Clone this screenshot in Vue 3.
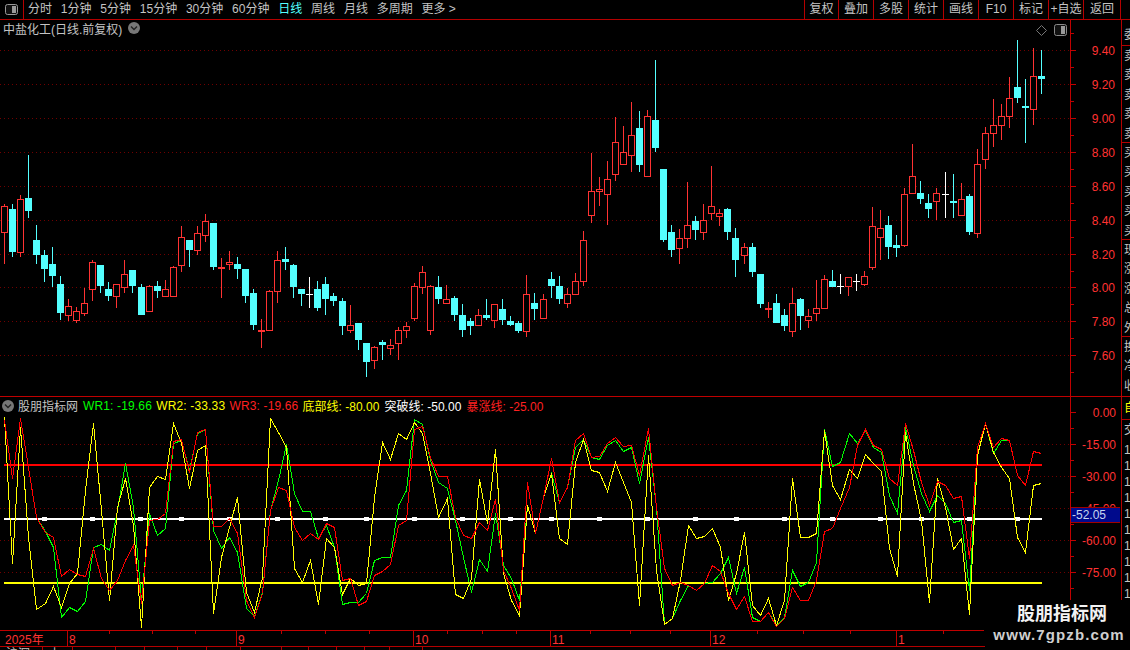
<script setup>
const stepX = 8.04
const xOf = (i) => 4.33 + stepX * i

const seg1 = [
  [192,199,278,372,'r'],[192,207,336,351,'c'],[165,178,338,351,'r'],[45,174,213,234,'c'],[255,300,345,372,'c'],
  [330,345,387,426,'c'],[321,372,408,441,'c'],[408,432,519,540,'c'],[477,499,527,543,'r'],[501,514,542,549,'r'],
  [444,490,521,528,'r'],[360,367,449,483,'r'],[375,375,438,459,'c'],[426,447,468,483,'c'],[433,433,470,504,'r'],
  [360,403,443,459,'r'],[390,390,438,459,'c'],[432,441,525,525,'c'],[435,439,515,515,'r'],[423,438,453,474,'c'],
  [420,448,470,470,'r'],[378,382,470,470,'r'],[258,292,377,396,'r'],[300,300,330,381,'c'],[258,280,332,345,'r'],
  [222,244,287,306,'r'],[249,249,381,390,'c'],[354,382,388,474,'r'],[333,367,374,390,'r'],[351,372,387,417,'c'],
  [387,387,468,489,'c'],[447,459,555,570,'c'],[537,570,576,624,'d'],[450,454,572,572,'r'],[333,361,455,489,'r'],
  [321,357,366,390,'c'],[372,375,441,474,'c'],[447,447,462,498,'c'],[411,462,465,504,'w'],[423,447,504,513,'c'],
  [411,432,477,525,'c'],[459,468,483,498,'c'],[474,483,558,585,'c'],[495,556,572,579,'r'],[549,549,600,630,'c']
]
const seg2 = [
  [879,879,936,981,'c'],[888,892,932,957,'r'],[870,876,885,930,'c'],[867,886,896,915,'r'],[831,841,881,930,'r'],
  [816,829,842,864,'r'],[699,709,806,813,'r'],[648,667,713,732,'r'],[705,709,842,855,'r'],[678,711,747,762,'c'],
  [705,748,762,762,'r'],[738,744,795,813,'c'],[762,795,840,861,'c'],[804,813,828,855,'c'],[777,796,827,827,'r'],
  [747,795,804,810,'c'],[763,763,812,834,'r'],[747,777,810,825,'c'],[798,813,825,828,'c'],[813,819,843,849,'c'],
  [675,733,845,861,'r'],[729,759,777,810,'c'],[732,748,806,806,'r'],[666,687,708,744,'c'],[678,708,747,762,'c'],
  [714,733,761,774,'r'],[669,694,734,734,'r'],[543,571,695,708,'r'],[309,424,497,519,'r'],[381,418,425,468,'r'],
  [333,388,434,525,'r'],[201,277,374,393,'r'],[228,307,344,344,'r'],[156,256,317,366,'r'],[183,234,345,366,'c'],
  [180,199,380,380,'r'],[30,210,294,306,'c'],[357,357,570,576,'c'],[525,546,600,621,'c'],[537,565,596,642,'r'],
  [396,526,566,594,'r'],[498,513,540,570,'c'],[462,511,548,570,'r'],[348,469,491,510,'r']
]
const seg3 = [
  [537,549,560,588,'r'],[534,537,606,630,'c'],[594,624,690,741,'c'],[639,652,677,702,'r'],[639,651,726,741,'c'],
  [732,732,822,834,'c'],[816,834,839,864,'d'],[792,819,879,879,'c'],[837,855,888,903,'c'],[774,820,905,921,'r'],
  [804,807,858,900,'c'],[837,859,873,894,'r'],[750,835,851,873,'r'],[735,748,836,836,'r'],[720,753,771,771,'c'],
  [732,768,771,792,'w'],[742,742,770,798,'r'],[732,752,755,783,'w'],[723,739,765,768,'r'],[531,589,713,720,'r'],
  [540,595,623,690,'r'],[558,585,651,687,'c'],[615,645,654,681,'c'],[474,493,647,651,'r'],[342,439,491,491,'r'],
  [453,489,507,522,'c'],[492,519,537,564,'c'],[474,490,515,570,'r'],[426,492,495,564,'w'],[432,513,519,564,'c'],
  [459,508,559,559,'r'],[492,498,606,615,'c'],[357,403,611,624,'r'],[291,310,389,417,'r'],[207,286,311,351,'r'],
  [222,259,287,330,'r'],[141,205,260,294,'r'],[30,171,204,219,'c'],[147,228,234,339,'c'],[54,139,239,285,'r'],
  [60,139,147,192,'c']
]

const toCandles = (origin, rows) => rows.map(([h, t, b, l, k]) => ({
  h: Math.round(origin + h / 3),
  t: Math.round(origin + t / 3),
  b: Math.round(origin + b / 3),
  l: Math.round(origin + l / 3),
  k
}))

const candles = [...toCandles(140, seg1), ...toCandles(50, seg2), ...toCandles(30, seg3)].map((c, i) => {
  const px = Math.floor(xOf(i))
  return { ...c, px, key: i }
})

const colorOf = { r: '#ff3232', c: '#54ffff', d: '#ff3232', w: '#ffffff' }

const yellow = [20,460,50,380,597,580,527,590,520,490,240,40,300,570,290,205,345,650,230,198,208,40,100,235,120,105,610,440,350,260,545,605,500,25,65,110,475,515,450,583,385,410,553,505,
  525,518,260,95,148,70,87,35,70,190,320,263,553,565,505,208,340,118,490,570,615,285,370,260,190,385,403,155,88,180,185,243,155,215,275,585,135,480,642,625,510,345,385,378,
  355,410,570,490,367,585,615,563,645,570,205,382,382,370,60,225,268,178,203,133,160,183,415,498,65,220,330,575,205,290,417,385,612,135,40,125,170,205,380,427,225,220]
const green = [30,205,25,170,320,362,410,620,590,604,573,410,403,420,300,158,290,570,308,375,355,100,90,180,70,58,360,415,380,425,595,618,545,300,210,103,250,303,303,385,345,410,583,575,
  575,550,450,442,442,285,240,28,42,150,215,235,330,440,545,448,482,310,465,505,570,285,370,260,190,275,230,110,88,140,148,105,90,122,110,220,80,290,642,625,570,525,540,520,
  515,490,440,550,472,620,632,605,645,620,480,527,515,455,58,168,155,70,100,60,110,125,255,310,50,165,250,302,255,280,335,330,540,135,40,130,90,90,195,225,122,130]
const red = [30,205,25,170,320,365,380,498,478,492,497,415,505,540,510,450,405,580,330,328,310,92,88,185,65,58,348,348,325,370,570,620,550,300,230,240,350,390,370,388,338,350,510,505,
  585,572,495,483,463,345,330,58,48,140,198,198,320,375,385,335,360,268,480,535,600,215,370,260,145,275,230,90,68,140,138,100,80,108,105,195,55,290,475,525,515,525,540,520,
  465,482,550,597,558,632,634,605,648,625,530,570,570,510,362,355,295,230,105,57,105,118,205,225,38,120,215,285,212,225,265,258,445,110,40,110,85,90,195,225,122,130]

const toPts = (arr) => arr.map((z, i) => `${Math.round(xOf(i)) + 0.5},${Math.round(410 + z / 3) + 0.5}`).join(' ')
const series = [
  { id: 'g', color: '#00ff00', pts: toPts(green) },
  { id: 'y', color: '#ffff00', pts: toPts(yellow) },
  { id: 'r', color: '#ff0000', pts: toPts(red) }
]

const mainGrid = [50, 84, 118, 152, 186, 220, 254, 287, 321, 355]
const mainLabels = [
  ['9.40', 50], ['9.20', 84], ['9.00', 118], ['8.80', 152], ['8.60', 186],
  ['8.40', 220], ['8.20', 254], ['8.00', 287], ['7.80', 321], ['7.60', 355]
]
const mainMinor = [33, 67, 101, 135, 169, 203, 237, 271, 304, 338, 372]
const indGrid = [444, 476, 508, 540, 572]
const indLabels = [['0.00', 412], ['-15.00', 444], ['-30.00', 476], ['-45.00', 508], ['-60.00', 540], ['-75.00', 572]]
const indMinor = [428, 460, 492, 524, 556, 588]
const squares = [44, 92, 140, 181, 229, 277, 325, 366, 414, 462, 510, 551, 599, 647, 695, 736, 784, 832, 880, 921, 969, 1017]

const periods = [
  { t: '分时' }, { t: '1分钟' }, { t: '5分钟' }, { t: '15分钟' }, { t: '30分钟' }, { t: '60分钟' },
  { t: '日线', on: true }, { t: '周线' }, { t: '月线' }, { t: '多周期' }, { t: '更多 >' }
]
const tools = [
  { t: '复权', w: 34 }, { t: '叠加', w: 35 }, { t: '多股', w: 35 }, { t: '统计', w: 35 }, { t: '画线', w: 35 },
  { t: 'F10', w: 35 }, { t: '标记', w: 35 }, { t: '+自选', w: 35 }, { t: '返回', w: 37 }
]
const legend = [
  { t: 'WR1: -19.66', c: 'lg wr' }, { t: 'WR2: -33.33', c: 'ly wr' }, { t: 'WR3: -19.66', c: 'lr wr' },
  { t: '底部线: -80.00', c: 'ly' }, { t: '突破线: -50.00', c: 'lw' }, { t: '暴涨线: -25.00', c: 'lr' }
]
const quoteGroups = [
  ['委'], ['卖', '卖', '卖', '卖', '卖'], ['买', '买', '买', '买', '买'], ['现', '涨', '涨', '总', '外'], ['换', '净', '收']
]
const tradeRows = Array.from({ length: 10 }, (_, i) => i)

const months = [[67, '8'], [236, '9'], [413, '10'], [550, '11'], [710, '12'], [896, '1']]
const minorTicks = [109, 152, 195, 281, 325, 369, 447, 482, 516, 590, 630, 670, 757, 803, 850, 943]
const tabs = [
  { t: '沪深', w: 43 }, { t: '上', w: 30 }, { t: '', w: 43 }, { t: '', w: 29 }, { t: '', w: 33 }, { t: '', w: 29 },
  { t: '', w: 34 }, { t: '', w: 41 }, { t: '', w: 27 }, { t: '', w: 28 }, { t: '', w: 28 }, { t: '', w: 25 }, { t: '', w: 33 }
]
</script>

<template>
  <div class="app">
    <header class="toolbar">
      <div class="logo">
        <svg width="13" height="11" viewBox="0 0 13 11">
          <rect x="0.5" y="0.5" width="12" height="10" rx="2" fill="#111" stroke="#9a9a9a" />
          <rect x="7" y="2" width="4" height="7" fill="#9a9a9a" />
        </svg>
      </div>
      <nav class="periods">
        <span v-for="p in periods" :key="p.t" :class="['period', { on: p.on }]">{{ p.t }}</span>
      </nav>
      <div class="tools">
        <span v-for="b in tools" :key="b.t" class="tool" :style="{ width: b.w + 'px' }">{{ b.t }}</span>
      </div>
    </header>

    <section class="main">
      <div class="plot">
        <svg class="chart" width="1070" height="376" viewBox="0 20 1070 376" shape-rendering="crispEdges">
          <line v-for="y in mainGrid" :key="y" x1="0" x2="1070" :y1="y + 0.5" :y2="y + 0.5" class="dots" />
          <g v-for="c in candles" :key="c.key">
            <rect :x="c.px" :y="c.h" width="1" :height="c.l - c.h" :fill="colorOf[c.k]" />
            <rect v-if="c.k === 'r'" :x="c.px - 2.5" :y="c.t + 0.5" width="6" :height="Math.max(c.b - c.t - 1, 1)" fill="#000" stroke="#ff3232" />
            <rect v-else :x="c.px - 3" :y="c.t" width="7" :height="Math.max(c.b - c.t, 1)" :fill="colorOf[c.k]" />
          </g>
        </svg>
        <div class="title">
          <span>中盐化工(日线.前复权)</span>
          <svg class="chev" width="12" height="12" viewBox="0 0 12 12">
            <circle cx="6" cy="6" r="6" fill="#777" />
            <path d="M3 4.5 L6 7.5 L9 4.5" fill="none" stroke="#222" stroke-width="1.4" />
          </svg>
        </div>
        <div class="corner">
          <svg width="11" height="11" viewBox="0 0 11 11">
            <path d="M5.5 0.5 L10.5 5.5 L5.5 10.5 L0.5 5.5 Z" fill="none" stroke="#777" />
          </svg>
          <svg width="13" height="12" viewBox="0 0 13 12">
            <rect x="0.5" y="0.5" width="12" height="11" rx="2" fill="#111" stroke="#8a8a8a" />
            <rect x="7" y="2" width="4" height="8" fill="#9a9a9a" />
          </svg>
        </div>
      </div>
      <div class="axis">
        <svg width="50" height="376" viewBox="1071 20 50 376" shape-rendering="crispEdges">
          <line v-for="l in mainLabels" :key="l[0]" x1="1071" x2="1076" :y1="l[1] + 0.5" :y2="l[1] + 0.5" class="tick" />
          <line v-for="y in mainMinor" :key="y" x1="1071" x2="1074" :y1="y + 0.5" :y2="y + 0.5" class="tick" />
          <text v-for="l in mainLabels" :key="'t' + l[0]" x="1115" :y="l[1] + 5" class="axis-text" text-anchor="end">{{ l[0] }}</text>
        </svg>
      </div>
      <aside class="side">
        <div v-for="(g, gi) in quoteGroups" :key="gi" :class="['group', 'group-' + gi]">
          <span v-for="(c, ci) in g" :key="ci">{{ c }}</span>
        </div>
      </aside>
    </section>

    <section class="indicator">
      <div class="plot">
        <svg class="chart" width="1070" height="233" viewBox="0 397 1070 233" shape-rendering="crispEdges">
          <line v-for="y in indGrid" :key="y" x1="0" x2="1070" :y1="y + 0.5" :y2="y + 0.5" class="dots" />
          <rect x="4" y="464" width="1038" height="2" fill="#ff0000" />
          <rect x="4" y="518" width="1038" height="2" fill="#ffffff" />
          <rect x="4" y="582" width="1038" height="2" fill="#ffff00" />
          <rect v-for="s in squares" :key="s" :x="s - 2" y="517" width="5" height="4" fill="#ffffff" />
          <polyline v-for="s in series" :key="s.id" :points="s.pts" fill="none" :stroke="s.color" stroke-width="1" />
        </svg>
        <div class="legend">
          <svg class="chev" width="12" height="12" viewBox="0 0 12 12">
            <circle cx="6" cy="6" r="6" fill="#777" />
            <path d="M3 4.5 L6 7.5 L9 4.5" fill="none" stroke="#222" stroke-width="1.4" />
          </svg>
          <span class="lname">股朋指标网</span>
          <span v-for="l in legend" :key="l.t" :class="['litem', l.c]">{{ l.t }}</span>
        </div>
      </div>
      <div class="axis">
        <svg width="50" height="233" viewBox="1071 397 50 233" shape-rendering="crispEdges">
          <line v-for="l in indLabels" :key="l[0]" x1="1071" x2="1076" :y1="l[1] + 0.5" :y2="l[1] + 0.5" class="tick" />
          <line v-for="y in indMinor" :key="y" x1="1071" x2="1074" :y1="y + 0.5" :y2="y + 0.5" class="tick" />
          <text v-for="l in indLabels" :key="'t' + l[0]" x="1116" :y="l[1] + 5" class="axis-text" text-anchor="end">{{ l[0] }}</text>
        </svg>
        <div class="tag">-52.05</div>
      </div>
      <aside class="side">
        <div class="self">自</div>
        <div class="trade-head">交</div>
        <div class="trades">
          <span v-for="r in tradeRows" :key="r">1</span>
        </div>
      </aside>
    </section>

    <footer class="timeaxis">
      <svg width="985" height="16" viewBox="0 630 985 16" shape-rendering="crispEdges">
        <line x1="0" x2="984" y1="630.5" y2="630.5" class="tick" />
        <line v-for="m in months" :key="m[0]" :x1="m[0] + 0.5" :x2="m[0] + 0.5" y1="630" y2="646" class="tick" />
        <line v-for="t in minorTicks" :key="t" :x1="t + 0.5" :x2="t + 0.5" y1="631" y2="634" class="tick" />
        <text x="5" y="644" class="time-text">2025年</text>
        <text v-for="m in months" :key="'m' + m[0]" :x="m[0] + 2" y="644" class="time-text">{{ m[1] }}</text>
      </svg>
    </footer>

    <div class="tabs">
      <span v-for="(t, i) in tabs" :key="i" class="tab" :style="{ width: t.w + 'px' }">{{ t.t }}</span>
    </div>

    <div class="watermark">
      <div class="wm-name">股朋指标网</div>
      <div class="wm-url">www.7gpzb.com</div>
    </div>
  </div>
</template>

<style scoped>
.app {
  position: relative;
  width: 1130px;
  height: 650px;
  overflow: hidden;
  background: #000;
  display: flex;
  flex-direction: column;
  color: #c4c4c4;
  font-family: "Liberation Sans", "Noto Sans CJK SC", sans-serif;
  font-size: 12px;
}
.toolbar {
  height: 19px;
  flex: none;
  display: flex;
  border-bottom: 1px solid #b40000;
  line-height: 19px;
}
.logo {
  border-right: 1px solid #b40000;
  display: flex;
  align-items: center;
  padding-left: 5px;
  box-sizing: border-box;
  width: 24px;
}
.periods {
  display: flex;
  gap: 8.8px;
  padding-left: 4px;
}
.period.on { color: #54ffff; }
.tools {
  margin-left: auto;
  display: flex;
  padding-right: 9px;
}
.tool {
  box-sizing: border-box;
  border-left: 1px solid #b40000;
  text-align: center;
  white-space: nowrap;
}
.tool:last-child { border-right: 1px solid #b40000; width: 38px !important; }

.main {
  height: 377px;
  flex: none;
  display: flex;
  border-bottom: 1px solid #c00000;
  box-sizing: border-box;
}
.indicator {
  height: 233px;
  flex: none;
  display: flex;
}
.plot {
  position: relative;
  width: 1070px;
  flex: none;
}
.chart { display: block; }
.dots {
  stroke: #700000;
  stroke-width: 1;
  stroke-dasharray: 1 3;
}
.tick { stroke: #c00000; stroke-width: 1; }
.axis {
  position: relative;
  width: 51px;
  flex: none;
  box-sizing: border-box;
  border-left: 1px solid #c00000;
}
.axis svg { display: block; }
.axis-text {
  fill: #ff3232;
  font-size: 12px;
  font-family: "Liberation Sans", sans-serif;
}
.side {
  flex: none;
  width: 9px;
  box-sizing: border-box;
  border-left: 1px solid #b40000;
  overflow: hidden;
  display: flex;
  flex-direction: column;
  padding-left: 2px;
}
.group {
  display: flex;
  flex-direction: column;
  box-sizing: border-box;
  height: 97px;
  border-bottom: 1px solid #b40000;
  margin-left: -2px;
  padding-left: 2px;
  width: 20px;
  padding-top: 1px;
}
.group-0 { height: 26px; padding-top: 6px; }
.group-4 { height: 60px; border-bottom: 0; }
.group span {
  height: 19.4px;
  line-height: 19.4px;
  width: 12px;
}
.title {
  position: absolute;
  left: 3px;
  top: -1px;
  height: 18px;
  display: flex;
  align-items: center;
  gap: 6px;
  white-space: nowrap;
}
.chev { flex: none; display: block; }
.corner {
  position: absolute;
  right: 3px;
  top: 4px;
  display: flex;
  align-items: center;
  gap: 7px;
}
.legend {
  position: absolute;
  left: 2px;
  top: 0;
  height: 17px;
  display: flex;
  align-items: center;
  white-space: nowrap;
}
.lname { margin-left: 4px; margin-right: 5px; color: #c4c4c4; width: 60px; }
.litem { margin-right: 5.3px; }
.wr { letter-spacing: 0.15px; margin-right: 4.2px; }
.lg { color: #00ff00; }
.ly { color: #ffff00; }
.lr { color: #ff2020; }
.lw { color: #ffffff; }
.tag {
  position: absolute;
  left: 0;
  top: 110px;
  width: 49px;
  height: 16px;
  box-sizing: border-box;
  background: #000a8c;
  border-top: 1px solid #a00000;
  border-bottom: 1px solid #a00000;
  color: #c6d6f0;
  line-height: 14px;
  padding-left: 1px;
  font-size: 12px;
}
.self {
  height: 21px;
  color: #ffff00;
  line-height: 21px;
  padding-top: 1px;
}
.trade-head {
  margin-left: -2px;
  padding-left: 2px;
  width: 20px;
  height: 21px;
  line-height: 20px;
  border-top: 1px solid #b40000;
}
.trades {
  display: flex;
  flex-direction: column;
  padding-top: 1px;
}
.trades span {
  height: 16px;
  line-height: 16px;
}
.timeaxis {
  height: 16px;
  flex: none;
}
.timeaxis svg { display: block; }
.time-text {
  fill: #ff3232;
  font-size: 12px;
  font-family: "Liberation Sans", "Noto Sans CJK SC", sans-serif;
}
.tabs {
  height: 4px;
  flex: none;
  display: flex;
  overflow: hidden;
  box-sizing: border-box;
  border-top: 1px solid #b40000;
  width: 985px;
}
.tab {
  flex: none;
  box-sizing: border-box;
  border-right: 1px solid #b40000;
  padding-left: 6px;
  line-height: 14px;
}
.watermark {
  position: absolute;
  left: 985px;
  top: 600px;
  width: 145px;
  height: 50px;
  background: #000;
  text-align: center;
  padding-left: 3px;
  box-sizing: border-box;
}
.wm-name {
  margin-top: 1px;
  padding-left: 6px;
  font-family: "Noto Sans CJK SC", sans-serif;
  font-size: 18px;
  font-weight: 700;
  line-height: 22px;
  color: #f2f2f2;
}
.wm-url {
  margin-top: 3px;
  font-family: "Liberation Sans", sans-serif;
  font-size: 15px;
  font-weight: 700;
  line-height: 18px;
  color: #cfcfcf;
  letter-spacing: 1.1px;
  white-space: nowrap;
}
</style>
